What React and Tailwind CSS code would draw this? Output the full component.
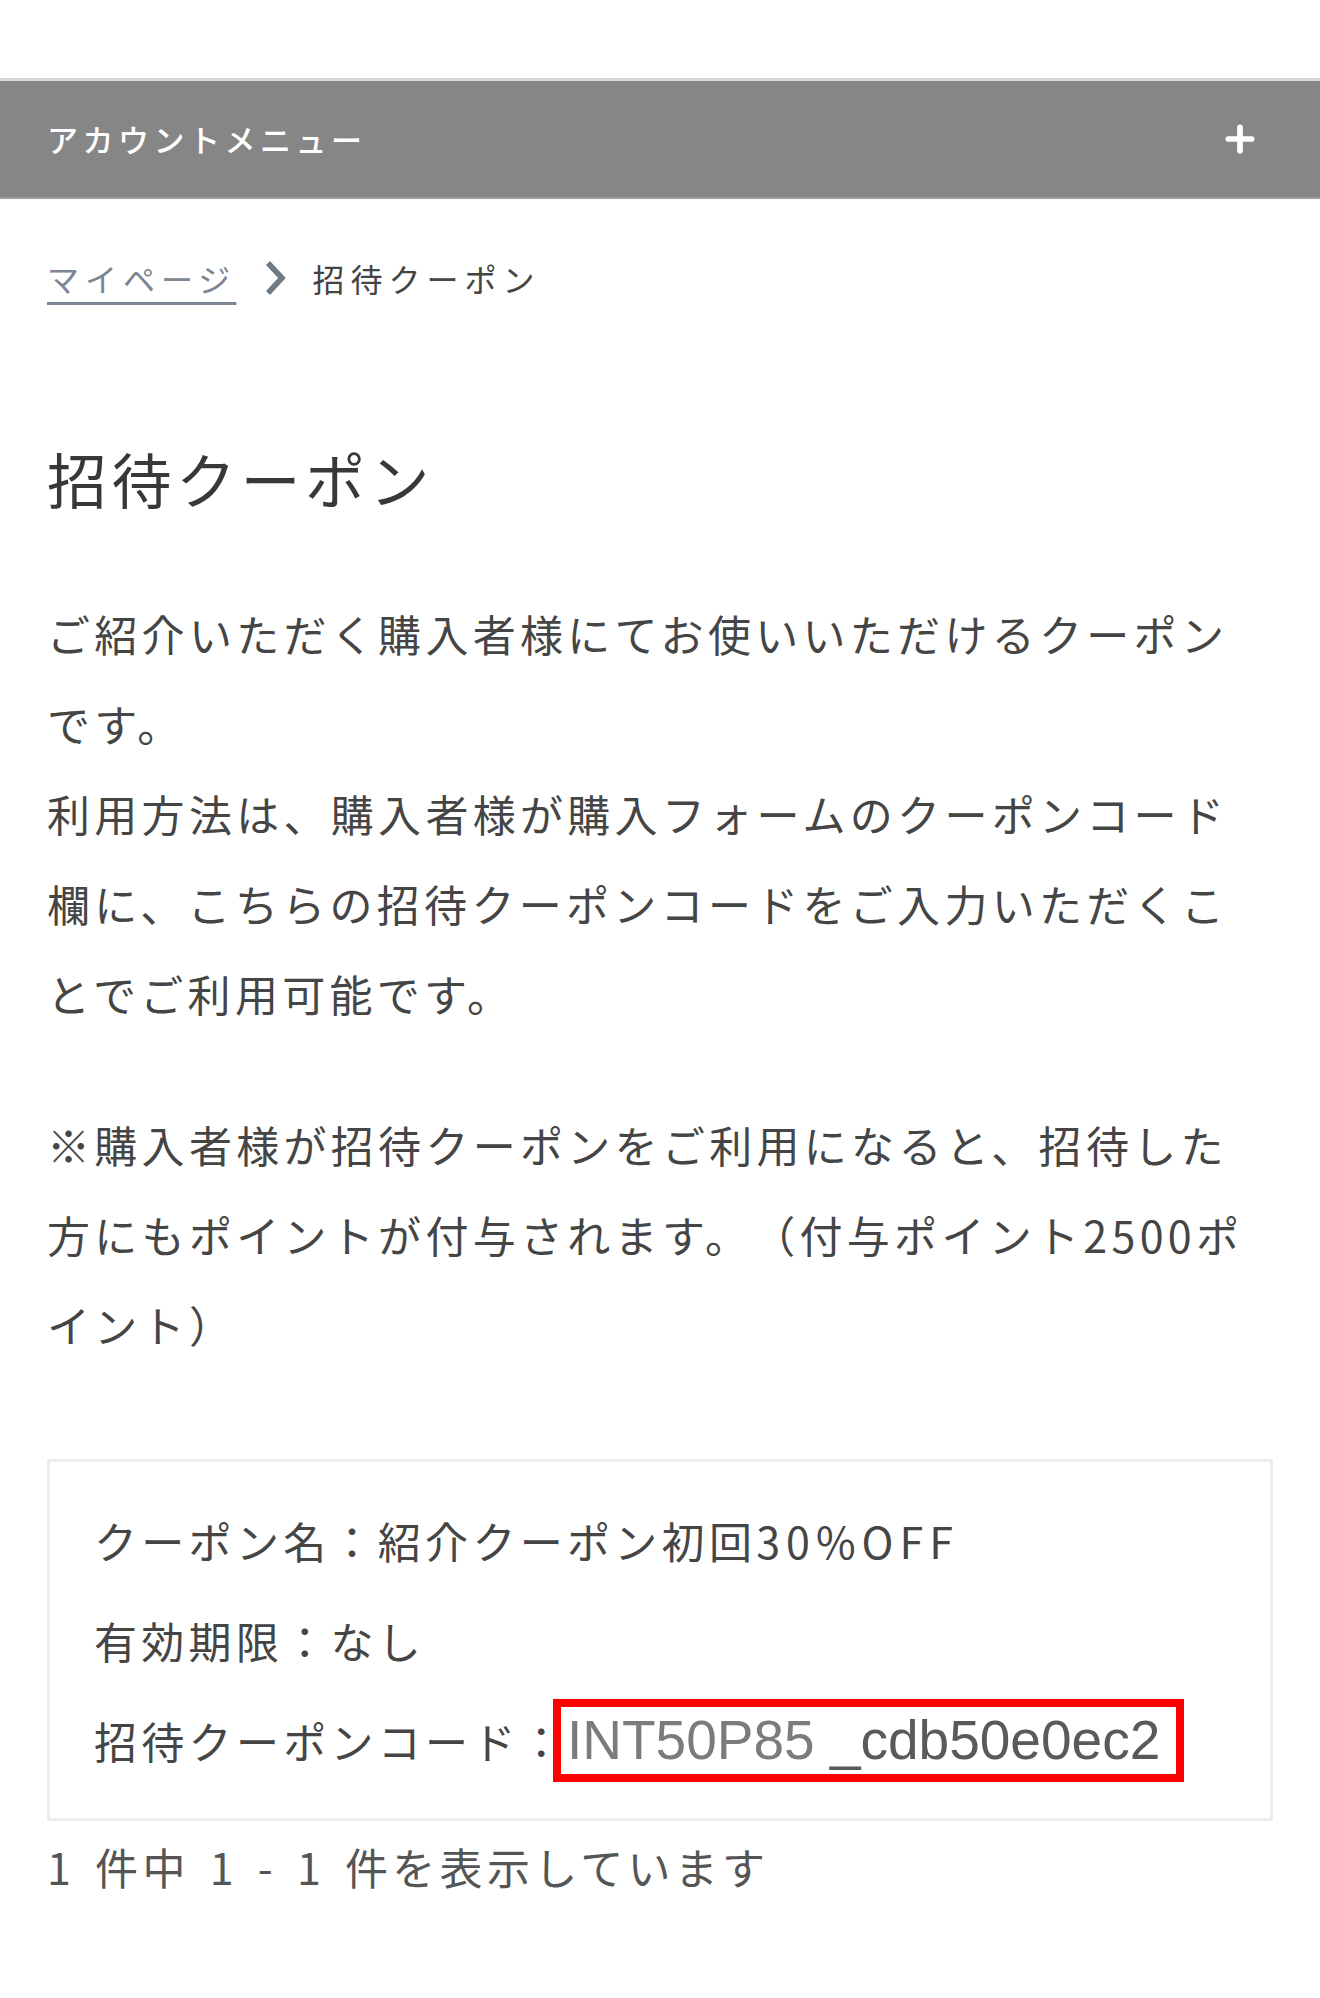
import { Plus } from 'lucide-react';

const jp = { fontFamily: '"Noto Sans CJK JP", "Noto Sans", sans-serif' };

export default function App() {
  return (
    <div className="min-h-[1998px] bg-white text-[#454545] [text-spacing-trim:space-all]" style={jp}>
      <div className="h-[78px]" />

      {/* account menu bar */}
      <div className="flex h-[121px] items-center justify-between border-t-[3px] border-b-2 border-t-[#d5d9dd] border-b-[#9a9ea2] bg-[#868686] pl-[47px] pr-[60px]">
        <span className="text-[31px] font-medium tracking-[4.5px] text-white">アカウントメニュー</span>
        <Plus className="h-[40px] w-[40px] text-white" strokeWidth={3.4} />
      </div>

      <div className="px-[47px]">
        {/* breadcrumb */}
        <nav className="mt-[55px] flex items-center text-[32px] leading-[48px] tracking-[6px]">
          <a className="text-[#7b8593] underline decoration-[3px] underline-offset-[10px]">マイページ</a>
          <svg viewBox="0 0 26 38" className="ml-[26px] mr-[24px] h-[38px] w-[26px]">
            <path d="M6 4 L20 19 L6 34" fill="none" stroke="#6f7a87" strokeWidth="5.5" />
          </svg>
          <span className="text-[#444]">招待クーポン</span>
        </nav>

        <h1 className="mt-[136px] text-[60px] font-normal leading-[80px] tracking-[4.5px] text-[#383838]">招待クーポン</h1>

        <div className="mt-[70px] text-[43px] leading-[90px] tracking-[4.3px]">
          <p>
            ご紹介いただく購入者様にてお使いいただけるクーポン<br />
            です。<br />
            利用方法は、購入者様が購入フォームのクーポンコード<br />
            欄に、こちらの招待クーポンコードをご入力いただくこ<br />
            とでご利用可能です。
          </p>
          <p className="mt-[61px]">
            ※購入者様が招待クーポンをご利用になると、招待した<br />
            方にもポイントが付与されます。（付与ポイント2500ポ<br />
            イント）
          </p>
        </div>

        {/* coupon card */}
        <div className="mt-[90px] border-[3px] border-[#eceef0] px-[44px] py-[28px] text-[43px] leading-[100px] tracking-[4.3px]">
          <p>クーポン名：紹介クーポン初回<span className="tracking-[6px]">30%OFF</span></p>
          <p>有効期限：なし</p>
          <p className="flex items-center">
            <span>招待クーポンコード：</span>
            <span
              className="inline-block pr-[10px] text-[55px] leading-[55px] tracking-normal outline-[8px] outline-offset-[6px] outline-[#ff0000] outline-solid"
              style={{ fontFamily: '"Liberation Sans", Arial, sans-serif' }}
            >
              <span className="text-[#7b7b7b]">INT50P85</span>
              <span className="text-[#5a5a5a]"> _cdb50e0ec2</span>
            </span>
          </p>
        </div>

        <p className="text-[43px] leading-[90px] tracking-[4.3px] text-[#555] [word-spacing:6px]">1 件中 1 - 1 件を表示しています</p>
      </div>
    </div>
  );
}
